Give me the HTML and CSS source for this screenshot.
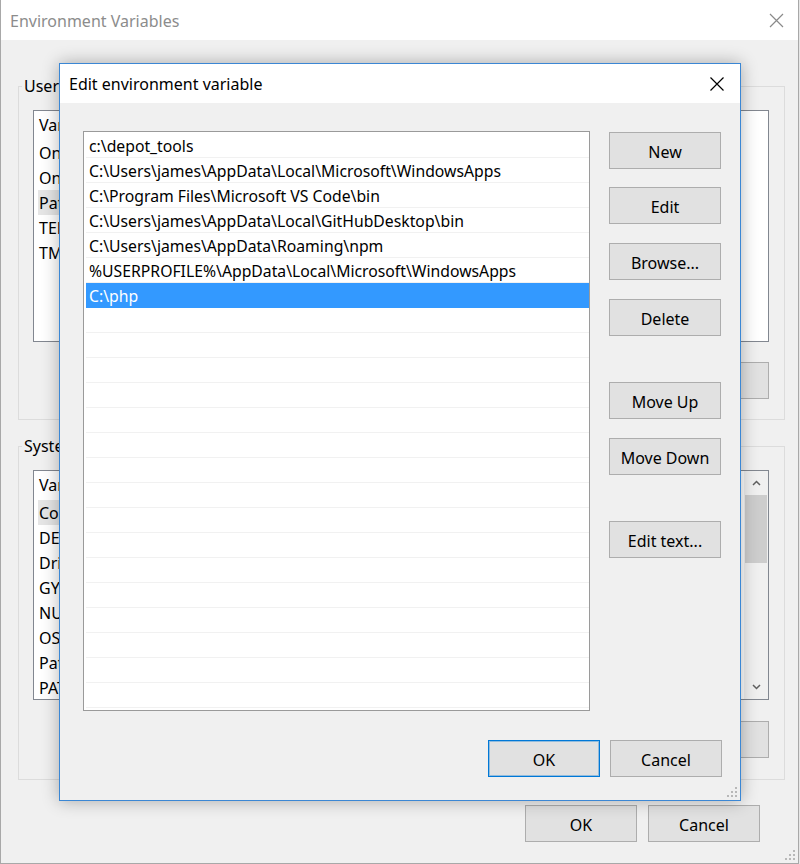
FILE: index.html
```html
<!DOCTYPE html>
<html>
<head>
<meta charset="utf-8">
<link rel="stylesheet" href="styles.css">
</head>
<body>
<div class="bgwin">
  <div class="bgtitle">
    <span>Environment Variables</span>
    <svg class="bgclose" width="15" height="15" viewBox="0 0 15 15"><path d="M1 1L14 14M14 1L1 14" stroke="#8a8a8a" stroke-width="1.2" fill="none"/></svg>
  </div>
  <div class="bgbody">
    <fieldset class="group">
      <legend>User</legend>
      <div class="lv lv-user">
        <div class="lv-head"><span class="c1">Variable</span></div>
        <div class="lv-row"><span class="c1">OneDrive</span></div>
        <div class="lv-row"><span class="c1">OneDriveConsumer</span></div>
        <div class="lv-row"><span class="c1 sel">Path</span></div>
        <div class="lv-row"><span class="c1">TEMP</span></div>
        <div class="lv-row"><span class="c1">TMP</span></div>
      </div>
      <div class="btnrow">
        <button class="btn">New...</button>
        <button class="btn">Edit...</button>
        <button class="btn">Delete</button>
      </div>
    </fieldset>
    <fieldset class="group group-sys">
      <legend>System</legend>
      <div class="lv lv-sys">
        <div class="lv-cols">
          <div class="lv-head"><span class="c1">Variable</span></div>
          <div class="lv-row"><span class="c1 sel">ComSpec</span></div>
          <div class="lv-row"><span class="c1">DEPOT</span></div>
          <div class="lv-row"><span class="c1">DriverData</span></div>
          <div class="lv-row"><span class="c1">GYP</span></div>
          <div class="lv-row"><span class="c1">NUMBER</span></div>
          <div class="lv-row"><span class="c1">OS</span></div>
          <div class="lv-row"><span class="c1">Path</span></div>
          <div class="lv-row"><span class="c1">PATHEXT</span></div>
        </div>
        <div class="sbar">
          <div class="sb-arrow"><svg width="9" height="6" viewBox="0 0 9 6"><path d="M1 5L4.5 1.5L8 5" stroke="#606060" stroke-width="1.5" fill="none"/></svg></div>
          <div class="sb-thumb"></div>
          <div class="sb-track"></div>
          <div class="sb-arrow"><svg width="9" height="6" viewBox="0 0 9 6"><path d="M1 1L4.5 4.5L8 1" stroke="#606060" stroke-width="1.5" fill="none"/></svg></div>
        </div>
      </div>
      <div class="btnrow btnrow-sys">
        <button class="btn">New...</button>
        <button class="btn">Edit...</button>
        <button class="btn">Delete</button>
      </div>
    </fieldset>
    <div class="btnrow btnrow-main">
      <button class="btn">OK</button>
      <button class="btn">Cancel</button>
    </div>
  </div>
  <svg class="grip grip-bg" width="12" height="12" viewBox="0 0 12 12"><g fill="#b8b8b8"><rect x="9" y="1" width="2" height="2"/><rect x="5" y="5" width="2" height="2"/><rect x="9" y="5" width="2" height="2"/><rect x="1" y="9" width="2" height="2"/><rect x="5" y="9" width="2" height="2"/><rect x="9" y="9" width="2" height="2"/></g></svg>
</div>

<div class="dlg">
  <div class="dlg-title">
    <span>Edit environment variable</span>
    <svg class="dlg-close" width="14" height="14" viewBox="0 0 14 14"><path d="M0.5 0.5L13.5 13.5M13.5 0.5L0.5 13.5" stroke="#000" stroke-width="1.2" fill="none"/></svg>
  </div>
  <div class="dlg-body">
    <div class="dlg-main">
      <div class="plist">
        <div class="prow">c:\depot_tools</div>
        <div class="prow">C:\Users\james\AppData\Local\Microsoft\WindowsApps</div>
        <div class="prow">C:\Program Files\Microsoft VS Code\bin</div>
        <div class="prow">C:\Users\james\AppData\Local\GitHubDesktop\bin</div>
        <div class="prow">C:\Users\james\AppData\Roaming\npm</div>
        <div class="prow">%USERPROFILE%\AppData\Local\Microsoft\WindowsApps</div>
        <div class="prow active">C:\php</div>
        <div class="prow"></div><div class="prow"></div><div class="prow"></div><div class="prow"></div>
        <div class="prow"></div><div class="prow"></div><div class="prow"></div><div class="prow"></div>
        <div class="prow"></div><div class="prow"></div><div class="prow"></div><div class="prow"></div>
        <div class="prow"></div><div class="prow"></div><div class="prow"></div><div class="prow"></div>
      </div>
      <div class="sidebtns">
        <button class="btn">New</button>
        <button class="btn gap-s">Edit</button>
        <button class="btn gap-s">Browse...</button>
        <button class="btn gap-s">Delete</button>
        <button class="btn gap-l">Move Up</button>
        <button class="btn gap-s">Move Down</button>
        <button class="btn gap-l">Edit text...</button>
      </div>
    </div>
    <div class="dlg-foot">
      <button class="btn btn-default">OK</button>
      <button class="btn">Cancel</button>
    </div>
  </div>
  <svg class="grip grip-dlg" width="12" height="12" viewBox="0 0 12 12"><g fill="#b8b8b8"><rect x="9" y="1" width="2" height="2"/><rect x="5" y="5" width="2" height="2"/><rect x="9" y="5" width="2" height="2"/><rect x="1" y="9" width="2" height="2"/><rect x="5" y="9" width="2" height="2"/><rect x="9" y="9" width="2" height="2"/></g></svg>
</div>
</body>
</html>
```

FILE: styles.css
```css
* { box-sizing: border-box; }

html, body {
  margin: 0;
  padding: 0;
}

body {
  width: 800px;
  height: 864px;
  overflow: hidden;
  position: relative;
  background: #e6e6e6;
  font-family: "Noto Sans", "Open Sans", sans-serif;
  font-size: 16px;
  color: #000;
}

/* ---------- background window ---------- */
.bgwin {
  position: relative;
  width: 799px;
  height: 864px;
  background: #f0f0f0;
  border-left: 1px solid #a8a8a8;
  border-right: 1px solid #a8a8a8;
  border-bottom: 1px solid #a8a8a8;
  display: flex;
  flex-direction: column;
}

.bgtitle {
  height: 40px;
  flex: none;
  background: #fff;
  display: flex;
  align-items: center;
  justify-content: space-between;
  padding: 2px 14px 0 9px;
  color: #8c8c8c;
  font-size: 16px;
}

.bgclose { margin-top: -2px; }

.bgbody {
  flex: 1;
  padding: 36px 13px 0 17px;
}

.group {
  margin: 0;
  border: 1px solid #dcdcdc;
  padding: 14px 15px 20px 14px;
  min-width: 0;
}

.group legend {
  margin-left: -11px;
  padding: 0 2px;
  font-size: 16px;
  line-height: 20px;
}

.group-sys {
  margin-top: 16px;
  padding-bottom: 21px;
}

.lv {
  background: #fff;
  border: 1px solid #828790;
  padding-left: 4px;
  overflow: hidden;
}

.lv-user { height: 232px; }

.lv-sys {
  height: 230px;
  display: flex;
}

.lv-cols { flex: 1; min-width: 0; }

.lv-head, .lv-row {
  display: flex;
  white-space: nowrap;
  font-size: 16px;
}

.lv-head {
  height: 29px;
  line-height: 29px;
}

.lv-row {
  height: 25px;
  line-height: 26px;
}

.c1 {
  flex: none;
  padding: 0 6px 0 1px;
}

.c1.sel { background: #e5e5e5; }

.sbar {
  width: 24px;
  flex: none;
  background: #f0f0f0;
  display: flex;
  flex-direction: column;
}

.sb-arrow {
  height: 24px;
  display: flex;
  align-items: center;
  justify-content: center;
}

.sb-thumb {
  height: 68px;
  margin: 0 1px;
  background: #cdcdcd;
}

.sb-track { flex: 1; }

.btnrow {
  display: flex;
  justify-content: flex-end;
  gap: 11px;
  margin-top: 20px;
}

.btnrow-sys { margin-top: 21px; }

.btnrow-main {
  margin-top: 25px;
  padding-right: 25px;
}

.btn {
  width: 112px;
  height: 37px;
  background: #e1e1e1;
  border: 1px solid #adadad;
  font-family: inherit;
  font-size: 16px;
  color: #000;
  padding: 2px 0 0;
  margin: 0;
}

.grip {
  position: absolute;
}

.grip-bg { right: 2px; bottom: 2px; }

/* ---------- foreground dialog ---------- */
.dlg {
  position: absolute;
  left: 59px;
  top: 63px;
  width: 682px;
  height: 738px;
  border: 1px solid #3b87d4;
  background: #f0f0f0;
  box-shadow: 0 0 16px rgba(0, 0, 0, 0.3);
  display: flex;
  flex-direction: column;
}

.dlg-title {
  height: 39px;
  flex: none;
  background: #fff;
  display: flex;
  align-items: center;
  justify-content: space-between;
  padding: 0 16px 0 9px;
  font-size: 16px;
}

.dlg-body {
  flex: 1;
  padding: 28px 18px 23px 23px;
  display: flex;
  flex-direction: column;
}

.dlg-main {
  display: flex;
  flex: 1;
}

.plist {
  width: 507px;
  height: 580px;
  background: #fff;
  border: 1px solid #9a9a9a;
  padding: 1px 0 0 2px;
  overflow: hidden;
}

.prow {
  height: 25px;
  line-height: 24px;
  padding: 1px 0 0 3px;
  border-bottom: 1px solid #f1f1f1;
  white-space: nowrap;
  font-size: 15.75px;
}

.prow.active {
  background: #3399ff;
  color: #fff;
  border-bottom-color: #3399ff;
}

.sidebtns {
  margin-left: 19px;
  padding-top: 1px;
  display: flex;
  flex-direction: column;
}

.gap-s { margin-top: 19px; }
.gap-l { margin-top: 46px; }

.sidebtns .btn:nth-child(2) { margin-top: 18px; }

.dlg-foot {
  display: flex;
  justify-content: flex-end;
  gap: 10px;
  margin-top: 28px;
}

.btn-default {
  border-color: #0078d7;
  box-shadow: inset 0 0 0 1px rgba(0, 120, 215, 0.35);
}

.grip-dlg { right: 2px; bottom: 2px; }
```
